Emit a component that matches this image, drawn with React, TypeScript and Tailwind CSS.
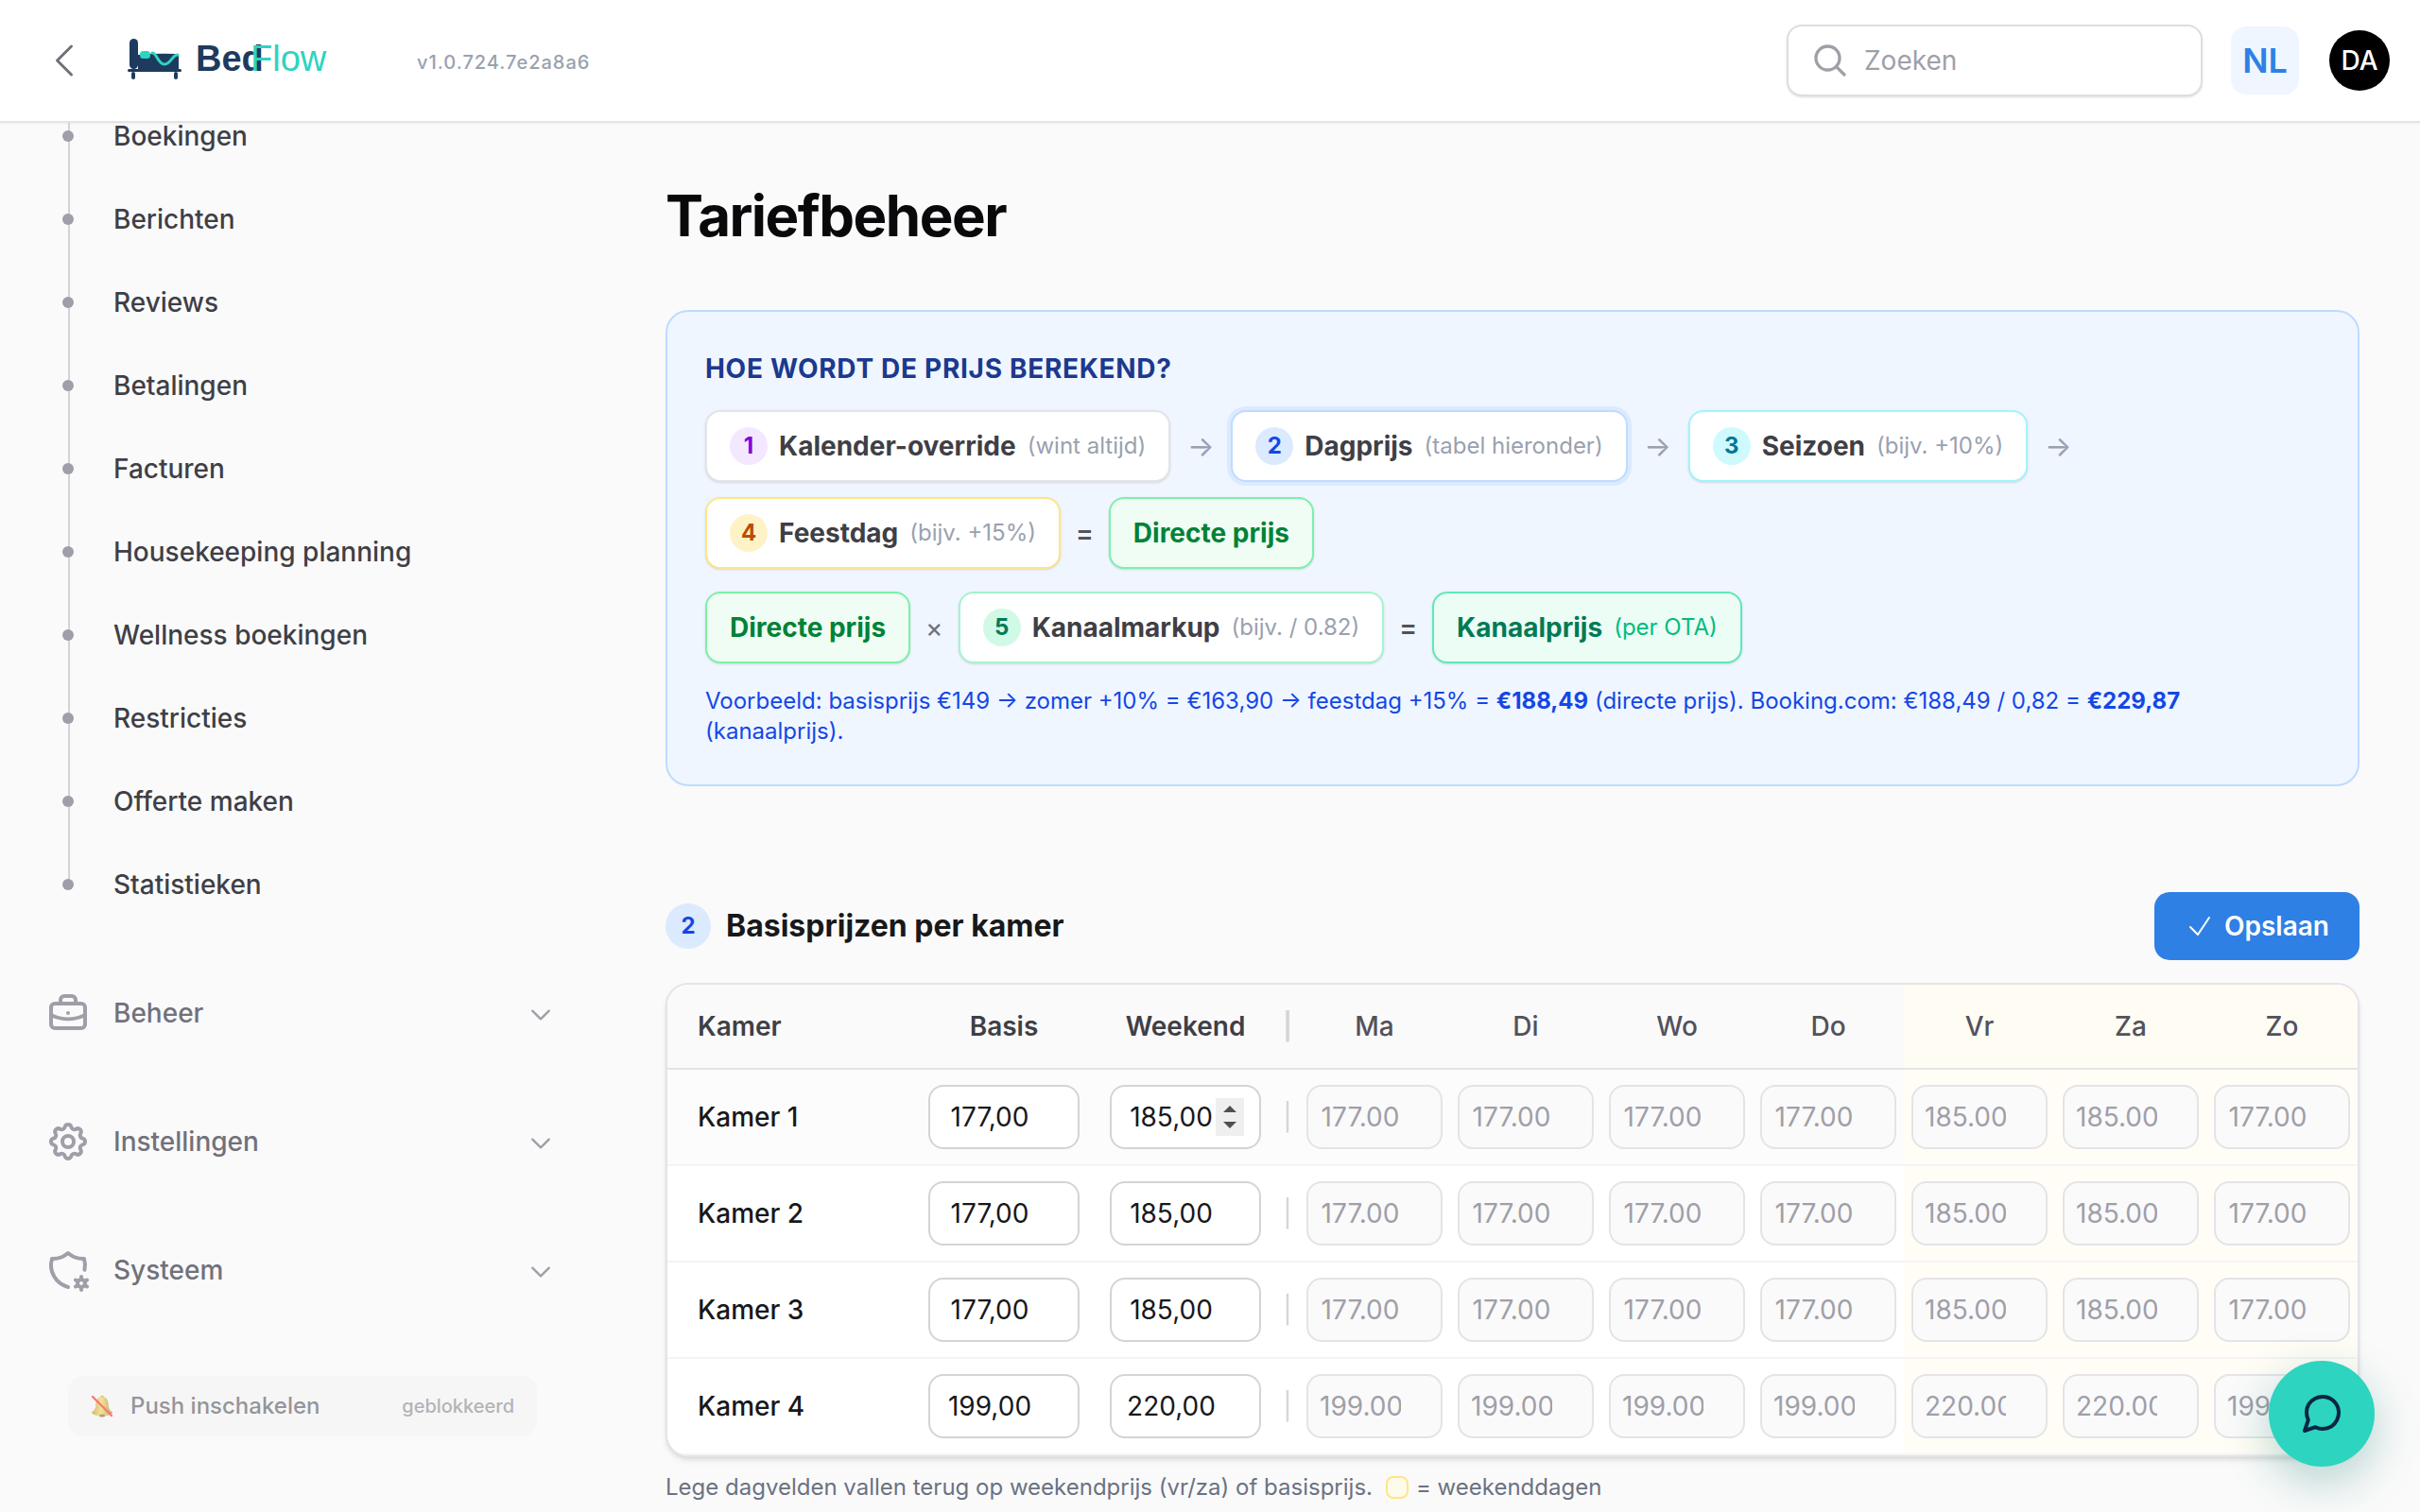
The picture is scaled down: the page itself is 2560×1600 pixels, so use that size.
import React from 'react';
import { TbBriefcase, TbSettings, TbShieldCog } from 'react-icons/tb';

const navItems = [
  'Boekingen',
  'Berichten',
  'Reviews',
  'Betalingen',
  'Facturen',
  'Housekeeping planning',
  'Wellness boekingen',
  'Restricties',
  'Offerte maken',
  'Statistieken',
];

const navGroups = [
  { label: 'Beheer', icon: TbBriefcase },
  { label: 'Instellingen', icon: TbSettings },
  { label: 'Systeem', icon: TbShieldCog },
];

const days = [
  { label: 'Ma', weekend: false },
  { label: 'Di', weekend: false },
  { label: 'Wo', weekend: false },
  { label: 'Do', weekend: false },
  { label: 'Vr', weekend: true },
  { label: 'Za', weekend: true },
  { label: 'Zo', weekend: true },
];

const week = (base: string, weekend: string) => [base, base, base, base, weekend, weekend, base];

const rooms = [
  { name: 'Kamer 1', base: '177,00', weekend: '185,00', prices: week('177.00', '185.00'), active: true },
  { name: 'Kamer 2', base: '177,00', weekend: '185,00', prices: week('177.00', '185.00'), active: false },
  { name: 'Kamer 3', base: '177,00', weekend: '185,00', prices: week('177.00', '185.00'), active: false },
  { name: 'Kamer 4', base: '199,00', weekend: '220,00', prices: week('199.00', '220.00'), active: false },
];

interface StrokeIconProps {
  d: string;
  className: string;
  strokeWidth?: number;
}

function StrokeIcon({ d, className, strokeWidth = 1.5 }: StrokeIconProps) {
  return (
    <svg
      viewBox="0 0 24 24"
      fill="none"
      stroke="currentColor"
      strokeWidth={strokeWidth}
      strokeLinecap="round"
      strokeLinejoin="round"
      className={className}
      aria-hidden="true"
    >
      <path d={d} />
    </svg>
  );
}

function Logo() {
  return (
    <svg viewBox="0 0 216 56" className="h-[56px] w-[216px]" role="img" aria-label="BedFlow">
      <rect x="3" y="5" width="9" height="32" rx="4.5" fill="#1e3a5f" />
      <path d="M12 22q20-2 40-1q3 0 3 3v14H12z" fill="#1e3a5f" />
      <rect x="1" y="37" width="57" height="3" rx="1.5" fill="#1e3a5f" />
      <rect x="5" y="40" width="4" height="8" rx="2" fill="#1e3a5f" />
      <rect x="50" y="40" width="4" height="8" rx="2" fill="#1e3a5f" />
      <rect x="14" y="18" width="11" height="8" rx="3.5" fill="#2dd4bf" />
      <path
        d="M27 20c5 0 6 12 13 12s8-10 14-10"
        fill="none"
        stroke="#2dd4bf"
        strokeWidth="3"
        strokeLinecap="round"
      />
      <text x="73" y="39" className="font-['Liberation_Sans',sans-serif] text-[38px] font-bold" fill="#1e3a5f">
        Bed
      </text>
      <text x="131" y="39" className="font-['Liberation_Sans',sans-serif] text-[38px]" fill="#2dd4bf">
        Flow
      </text>
    </svg>
  );
}

function BellOff() {
  return (
    <svg viewBox="0 0 24 24" className="size-6" aria-hidden="true">
      <defs>
        <linearGradient id="bell" x1="0" x2="1">
          <stop offset="0" stopColor="#b8891c" />
          <stop offset="0.45" stopColor="#f2d35a" />
          <stop offset="1" stopColor="#a87718" />
        </linearGradient>
      </defs>
      <circle cx="12" cy="2.5" r="1.8" fill="#b8891c" />
      <path d="M12 2c4.5 0 6.500 3.500 6.700 8 .2 4.500 1 6 4.300 8.500 0 2-5 4-11 4s-11-2-11-4c3.300-2.500 4.100-4 4.300-8.500.2-4.500 2.200-8 6.700-8z" fill="url(#bell)" />
      <ellipse cx="12" cy="22" rx="3" ry="1.600" fill="#8a6212" />
      <path d="M2 2l20 20" stroke="#ff2020" strokeWidth="2.400" strokeLinecap="round" />
    </svg>
  );
}

function Header() {
  return (
    <header className="relative z-10 flex h-[130px] shrink-0 items-center border-b-2 border-[#e4e4e7] bg-white pr-8 pl-11 shadow-xs">
      <button type="button" aria-label="Terug" className="text-[#71717b]">
        <StrokeIcon d="M15.750 19.500 8.250 12l7.500-7.500" className="size-12" />
      </button>
      <a href="#" className="ml-[42px]">
        <Logo />
      </a>
      <span className="ml-[91px] pt-1 text-[20px] font-medium tracking-wider text-[#99a1af]">v1.0.724.7e2a8a6</span>
      <div className="ml-auto flex items-center">
        <label className="flex h-[76px] w-[440px] items-center gap-4 rounded-2xl border-2 border-[#dedee1] bg-white px-6 shadow-sm">
          <StrokeIcon
            d="m21 21-5.197-5.197m0 0A7.500 7.500 0 1 0 5.196 5.196a7.500 7.500 0 0 0 10.607 10.607Z"
            strokeWidth={2}
            className="size-10 shrink-0 text-[#9f9fa9]"
          />
          <input
            type="search"
            aria-label="Zoeken"
            placeholder="Zoeken"
            className="w-full bg-transparent text-[28px] outline-none placeholder:text-[#9f9fa9]"
          />
        </label>
        <button
          type="button"
          className="ml-[30px] size-[72px] rounded-2xl bg-[#eff6ff] text-[36px] font-semibold text-[#2f80e4]"
        >
          NL
        </button>
        <button
          type="button"
          className="ml-8 size-16 rounded-full bg-black text-[28px] font-medium text-white"
        >
          DA
        </button>
      </div>
    </header>
  );
}

function Sidebar() {
  return (
    <aside className="w-[640px] shrink-0 overflow-hidden">
      <ul className="-mt-[30px]">
        {navItems.map((item, i) => (
          <li key={item} className="relative flex h-[88px] items-center pl-[66px]">
            <span
              className={
                i === navItems.length - 1
                  ? 'absolute top-0 left-[72px] h-1/2 w-[2px] bg-[#d4d4d8]'
                  : 'absolute top-0 left-[72px] h-full w-[2px] bg-[#d4d4d8]'
              }
            />
            <span className="relative size-3 rounded-full bg-[#9f9fa9]" />
            <a href="#" className="ml-[42px] text-[28px] leading-none font-medium text-[#3f3f46]">
              {item}
            </a>
          </li>
        ))}
      </ul>
      <div className="mt-[48px] flex flex-col gap-[48px]">
        {navGroups.map(({ label, icon: Icon }) => (
          <button
            key={label}
            type="button"
            className="flex h-[88px] w-full items-center pr-[54px] pl-12 text-left"
          >
            <Icon className="size-12 text-[#9f9fa9]" />
            <span className="ml-6 text-[28px] font-medium text-[#71717b]">{label}</span>
            <StrokeIcon
              d="m19.500 8.250-7.500 7.500-7.500-7.500"
              strokeWidth={2}
              className="mt-1 ml-auto size-7 text-[#9f9fa9]"
            />
          </button>
        ))}
      </div>
      <button
        type="button"
        className="mt-[68px] ml-[72px] flex h-16 w-[496px] items-center rounded-2xl bg-[#f4f4f5] px-6 opacity-60"
      >
        <BellOff />
        <span className="ml-[18px] text-[24px] font-medium text-[#52525b]">Push inschakelen</span>
        <span className="ml-auto text-[20px] font-medium text-[#84848a]">geblokkeerd</span>
      </button>
    </aside>
  );
}

interface StepProps {
  label: string;
  border: string;
  nr?: string;
  badge?: string;
  hint?: string;
  hintColor?: string;
}

function Step({ label, border, nr, badge, hint, hintColor = 'text-[#99a1af]' }: StepProps) {
  return (
    <div className={`flex items-center gap-3 rounded-2xl border-2 px-6 py-4 text-[28px] leading-[40px] font-bold ${border}`}>
      {nr && (
        <span className={`flex size-10 items-center justify-center rounded-full text-[24px] ${badge}`}>
          {nr}
        </span>
      )}
      <span>{label}</span>
      {hint && <span className={`text-[24px] font-normal ${hintColor}`}>{hint}</span>}
    </div>
  );
}

function Arrow() {
  return <span className="w-8 text-center text-[30px] leading-[40px] text-[#99a1af]">→</span>;
}

function Sign({ children, className }: { children: string; className: string }) {
  return <span className={`text-[28px] leading-[40px] ${className}`}>{children}</span>;
}

function PriceExplanation() {
  const direct = 'border-[#7bf1a8] bg-[#f0fdf4] text-[#008236] shadow-sm';

  return (
    <section className="rounded-3xl border-2 border-[#bedbff] bg-[#eff6ff] p-10">
      <h2 className="mb-6 text-[28px] leading-[40px] font-bold tracking-wide text-[#1c398e] uppercase">
        Hoe wordt de prijs berekend?
      </h2>
      <div className="flex flex-wrap items-center gap-4">
        <Step
          nr="1"
          label="Kalender-override"
          hint="(wint altijd)"
          border="border-[#e4e4e7] bg-white text-[#3f3f46] shadow-sm"
          badge="bg-[#f3e8ff] text-[#8200db]"
        />
        <Arrow />
        <Step
          nr="2"
          label="Dagprijs"
          hint="(tabel hieronder)"
          border="border-[#bedbff] bg-white text-[#3f3f46] shadow-sm ring-4 ring-[#dbeafe]"
          badge="bg-[#dbeafe] text-[#1447e6]"
        />
        <Arrow />
        <Step
          nr="3"
          label="Seizoen"
          hint="(bijv. +10%)"
          border="border-[#a2f4fd] bg-white text-[#3f3f46] shadow-sm"
          badge="bg-[#cefafe] text-[#007595]"
        />
        <Arrow />
        <Step
          nr="4"
          label="Feestdag"
          hint="(bijv. +15%)"
          border="border-[#fee685] bg-white text-[#3f3f46] shadow-sm"
          badge="bg-[#fef3c6] text-[#bb4d00]"
        />
        <Sign className="font-semibold text-[#52525b]">=</Sign>
        <Step label="Directe prijs" border={direct} />
      </div>
      <div className="mt-6 flex flex-wrap items-center gap-4">
        <Step label="Directe prijs" border={direct} />
        <Sign className="text-[#71717b]">×</Sign>
        <Step
          nr="5"
          label="Kanaalmarkup"
          hint="(bijv. / 0.82)"
          border="border-[#a4f4cf] bg-white text-[#3f3f46] shadow-sm"
          badge="bg-[#d0fae5] text-[#007a55]"
        />
        <Sign className="font-semibold text-[#52525b]">=</Sign>
        <Step
          label="Kanaalprijs"
          hint="(per OTA)"
          hintColor="text-[#00bc7d]"
          border="border-[#5ee9b5] bg-[#ecfdf5] text-[#007a55] shadow-sm"
        />
      </div>
      <p className="mt-6 text-[24px] leading-[32px] text-[#1447e6]">
        Voorbeeld: basisprijs €149 → zomer +10% = €163,90 → feestdag +15% = <strong>€188,49</strong> (directe
        prijs). Booking.com: €188,49 / 0,82 = <strong>€229,87</strong> (kanaalprijs).
      </p>
    </section>
  );
}

function Spinner() {
  return (
    <span className="absolute top-[14px] right-[18px] flex h-10 w-[30px] flex-col items-center justify-center gap-[10px] bg-[#efefef] text-[#505050]">
      <svg viewBox="0 0 14 7" className="h-[7px] w-[14px]" fill="currentColor" aria-hidden="true">
        <path d="M0 7 7 0l7 7z" />
      </svg>
      <svg viewBox="0 0 14 7" className="h-[7px] w-[14px]" fill="currentColor" aria-hidden="true">
        <path d="M0 0l7 7 7-7z" />
      </svg>
    </span>
  );
}

function PriceInput({ label, value, spinner }: { label: string; value: string; spinner?: boolean }) {
  return (
    <div className="relative">
      <input
        type="text"
        inputMode="decimal"
        aria-label={label}
        defaultValue={value}
        className="block h-[68px] w-full rounded-2xl border-2 border-[#d4d4d8] bg-white pr-[46px] pl-4 text-center text-[28px] text-[#18181b]"
      />
      {spinner && <Spinner />}
    </div>
  );
}

function PriceTable() {
  return (
    <div className="overflow-hidden rounded-3xl border-2 border-[#e4e4e7] bg-white shadow-md">
      <table className="w-full table-fixed border-separate border-spacing-0 text-[28px] leading-[40px]">
        <colgroup>
          <col />
          <col className="w-[192px]" />
          <col className="w-[192px]" />
          <col className="w-[24px]" />
          {days.map((day) => (
            <col key={day.label} className="w-[160px]" />
          ))}
        </colgroup>
        <thead>
          <tr className="bg-[#fafafa] text-[#3f3f46]">
            <th className="border-b-2 border-[#e4e4e7] px-8 py-6 text-left font-semibold">Kamer</th>
            <th className="border-b-2 border-[#e4e4e7] py-6 font-semibold">Basis</th>
            <th className="border-b-2 border-[#e4e4e7] py-6 font-semibold">Weekend</th>
            <th className="border-b-2 border-[#e4e4e7] py-6 font-semibold text-[#d4d4d8]">|</th>
            {days.map((day) => (
              <th
                key={day.label}
                className={`border-b-2 border-[#e4e4e7] py-6 font-medium text-[#52525b] ${day.weekend ? 'bg-[#fffcf3]' : ''}`}
              >
                {day.label}
              </th>
            ))}
          </tr>
        </thead>
        <tbody>
          {rooms.map((room) => (
            <tr key={room.name} className={room.active ? 'bg-[#fcfcfc]' : 'bg-white'}>
              <td className="border-b-2 border-[#f4f4f5] px-8 py-4 font-medium text-[#18181b]">{room.name}</td>
              <td className="border-b-2 border-[#f4f4f5] px-4 py-4">
                <PriceInput label={`${room.name} basis`} value={room.base} />
              </td>
              <td className="border-b-2 border-[#f4f4f5] px-4 py-4">
                <PriceInput label={`${room.name} weekend`} value={room.weekend} spinner={room.active} />
              </td>
              <td className="border-b-2 border-[#f4f4f5] text-center text-[#d4d4d8]">|</td>
              {days.map((day, i) => (
                <td
                  key={day.label}
                  className={`border-b-2 border-[#f4f4f5] px-2 py-4 ${day.weekend ? 'bg-[#fffdf6]' : ''}`}
                >
                  <input
                    type="text"
                    inputMode="decimal"
                    aria-label={`${room.name} ${day.label}`}
                    placeholder={room.prices[i]}
                    className="block h-[68px] w-full rounded-2xl border-2 border-[#e4e4e7] bg-[#fafafa] pr-[42px] pl-3 text-center text-[28px] placeholder:text-[#9f9fa9]"
                  />
                </td>
              ))}
            </tr>
          ))}
        </tbody>
      </table>
    </div>
  );
}

export default function App() {
  return (
    <div className="flex h-screen flex-col overflow-hidden bg-[#fafafa] font-['Inter',sans-serif]">
      <Header />
      <div className="flex min-h-0 flex-1">
        <Sidebar />
        <main className="min-w-0 flex-1 overflow-hidden px-16 pt-[62px]">
          <h1 className="mb-16 text-[60px] leading-[72px] font-bold tracking-tight text-[#09090b]">
            Tariefbeheer
          </h1>
          <PriceExplanation />
          <div className="mt-28 mb-6 flex items-center justify-between">
            <h2 className="flex items-center gap-4 text-[32px] font-bold text-[#18181b]">
              <span className="flex size-12 items-center justify-center rounded-full bg-[#dbeafe] text-[24px] text-[#1447e6]">
                2
              </span>
              Basisprijzen per kamer
            </h2>
            <button
              type="button"
              className="flex h-[72px] items-center gap-[10px] rounded-2xl bg-[#2f80e4] px-8 text-[28px] font-semibold text-white"
            >
              <StrokeIcon d="m4.500 12.750 6 6 9-13.500" className="size-8" />
              Opslaan
            </button>
          </div>
          <PriceTable />
          <p className="mt-4 flex items-center text-[24px] leading-[32px] text-[#6a7282]">
            Lege dagvelden vallen terug op weekendprijs (vr/za) of basisprijs.
            <span className="mr-2 ml-[14px] size-6 rounded-lg border-2 border-[#fee685] bg-[#fffbeb]" />= weekenddagen
          </p>
        </main>
      </div>
      <button
        type="button"
        aria-label="Chat openen"
        className="fixed right-12 bottom-12 z-20 flex size-28 items-center justify-center rounded-full bg-[#2dd4bf] text-[#0b2545] shadow-[0_16px_48px_rgba(20,120,110,0.3)]"
      >
        <StrokeIcon
          d="M21 11.500a8.380 8.380 0 0 1-.9 3.800 8.500 8.500 0 0 1-7.600 4.700 8.380 8.380 0 0 1-3.800-.9L3 21l1.900-5.700a8.380 8.380 0 0 1-.9-3.800 8.500 8.500 0 0 1 4.700-7.600 8.380 8.380 0 0 1 3.800-.9h.5a8.480 8.480 0 0 1 8 8v.5z"
          strokeWidth={2}
          className="size-12"
        />
      </button>
    </div>
  );
}
